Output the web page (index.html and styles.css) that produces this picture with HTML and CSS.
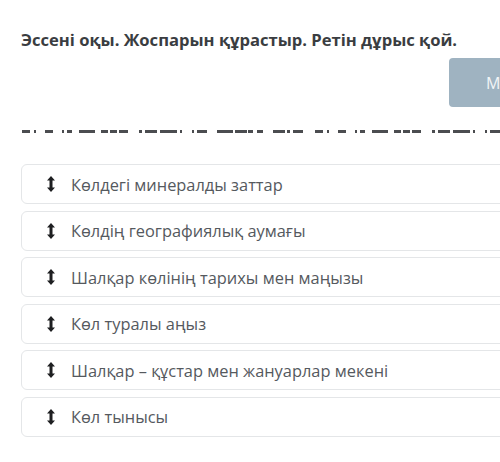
FILE: index.html
```html
<!DOCTYPE html>
<html lang="kk">
<head>
  <meta charset="UTF-8" />
  <title>Эссені оқы</title>
  <link rel="stylesheet" href="styles.css">
</head>
<body>

  <div class="page">
    <!-- Task header -->
    <h1 class="task-title">Эссені оқы. Жоспарын құрастыр. Ретін дұрыс қой.</h1>

    <div class="toolbar">
      <button class="btn-muted">М</button>
    </div>

    <!-- clipped line of text -->
    <svg class="cut-line" width="600" height="4" viewBox="0 0 600 4">
      <g fill="#4b4d50">
        <rect x="0" y="0" width="8" height="3"/><rect x="12" y="0" width="2" height="3"/>
        <rect x="23" y="0" width="8" height="3"/><rect x="40" y="0" width="2" height="3"/>
        <rect x="45" y="0" width="5" height="3"/><rect x="57" y="0" width="16" height="3"/>
        <rect x="79" y="0" width="7" height="3"/><rect x="88" y="0" width="7" height="3"/>
        <rect x="97" y="0" width="9" height="3"/><rect x="117" y="0" width="3" height="3"/>
        <rect x="123" y="0" width="12" height="3"/><rect x="138" y="0" width="17" height="3"/>
        <rect x="158" y="0" width="2" height="3"/><rect x="170" y="0" width="2" height="3"/>
        <rect x="175" y="0" width="10" height="3"/><rect x="195" y="0" width="16" height="3"/>
        <rect x="213" y="0" width="12" height="3"/><rect x="226" y="0" width="5" height="3"/>
        <rect x="235" y="0" width="6" height="3"/><rect x="251" y="0" width="12" height="3"/>
        <rect x="265" y="0" width="3" height="3"/><rect x="271" y="0" width="10" height="3"/>
      </g>
      <g fill="#4b4d50" transform="translate(293 0)">
        <rect x="0" y="0" width="8" height="3"/><rect x="12" y="0" width="2" height="3"/>
        <rect x="23" y="0" width="8" height="3"/><rect x="40" y="0" width="2" height="3"/>
        <rect x="45" y="0" width="5" height="3"/><rect x="57" y="0" width="16" height="3"/>
        <rect x="79" y="0" width="7" height="3"/><rect x="88" y="0" width="7" height="3"/>
        <rect x="97" y="0" width="9" height="3"/><rect x="117" y="0" width="3" height="3"/>
        <rect x="123" y="0" width="12" height="3"/><rect x="138" y="0" width="17" height="3"/>
        <rect x="158" y="0" width="2" height="3"/><rect x="170" y="0" width="2" height="3"/>
        <rect x="175" y="0" width="10" height="3"/><rect x="195" y="0" width="16" height="3"/>
      </g>
    </svg>

    <!-- Sortable list -->
    <ul class="sort-list">
      <li class="sort-item">
        <svg class="drag-icon" width="8" height="16" viewBox="0 0 8 16"><path d="M4 0 L8 4.5 H5.5 V11.5 H8 L4 16 L0 11.5 H2.5 V4.5 H0 Z" fill="#1e1f21"/></svg>
        <span>Көлдегі минералды заттар</span>
      </li>
      <li class="sort-item">
        <svg class="drag-icon" width="8" height="16" viewBox="0 0 8 16"><path d="M4 0 L8 4.5 H5.5 V11.5 H8 L4 16 L0 11.5 H2.5 V4.5 H0 Z" fill="#1e1f21"/></svg>
        <span>Көлдің географиялық аумағы</span>
      </li>
      <li class="sort-item">
        <svg class="drag-icon" width="8" height="16" viewBox="0 0 8 16"><path d="M4 0 L8 4.5 H5.5 V11.5 H8 L4 16 L0 11.5 H2.5 V4.5 H0 Z" fill="#1e1f21"/></svg>
        <span>Шалқар көлінің тарихы мен маңызы</span>
      </li>
      <li class="sort-item">
        <svg class="drag-icon" width="8" height="16" viewBox="0 0 8 16"><path d="M4 0 L8 4.5 H5.5 V11.5 H8 L4 16 L0 11.5 H2.5 V4.5 H0 Z" fill="#1e1f21"/></svg>
        <span>Көл туралы аңыз</span>
      </li>
      <li class="sort-item">
        <svg class="drag-icon" width="8" height="16" viewBox="0 0 8 16"><path d="M4 0 L8 4.5 H5.5 V11.5 H8 L4 16 L0 11.5 H2.5 V4.5 H0 Z" fill="#1e1f21"/></svg>
        <span>Шалқар – құстар мен жануарлар мекені</span>
      </li>
      <li class="sort-item">
        <svg class="drag-icon" width="8" height="16" viewBox="0 0 8 16"><path d="M4 0 L8 4.5 H5.5 V11.5 H8 L4 16 L0 11.5 H2.5 V4.5 H0 Z" fill="#1e1f21"/></svg>
        <span>Көл тынысы</span>
      </li>
    </ul>
  </div>

</body>
</html>
```

FILE: styles.css
```css
* {
  margin: 0;
  padding: 0;
  box-sizing: border-box;
  font-family: 'Open Sans', 'Noto Sans', sans-serif;
}

body {
  background: #fff;
  width: 500px;
  height: 462px;
  overflow: hidden;
}

.page {
  width: 600px;
  padding: 29px 0 0 21px;
}

/* Header */
.task-title {
  font-size: 16.6px;
  font-weight: 700;
  color: #3a3d41;
  line-height: 22px;
}

.toolbar {
  display: flex;
  margin-top: 7px;
}

.btn-muted {
  width: 130px;
  height: 49px;
  margin-left: 428px;
  background-color: #9fb3c1;
  border: none;
  border-radius: 4px;
  color: #f2f5f7;
  font-size: 16px;
  text-align: left;
  padding-left: 37px;
}

.cut-line {
  display: block;
  margin-top: 23px;
  margin-left: 1px;
}

/* Sortable list */
.sort-list {
  list-style: none;
  margin-top: 30px;
}

.sort-item {
  display: flex;
  align-items: center;
  height: 40px;
  margin-bottom: 6.5px;
  border: 1px solid #e4e6e8;
  border-radius: 6px;
  background: #fff;
  width: 560px;
  color: #55595e;
  font-size: 16.4px;
}

.drag-icon {
  margin-left: 25px;
  margin-right: 16px;
  flex-shrink: 0;
}
```
